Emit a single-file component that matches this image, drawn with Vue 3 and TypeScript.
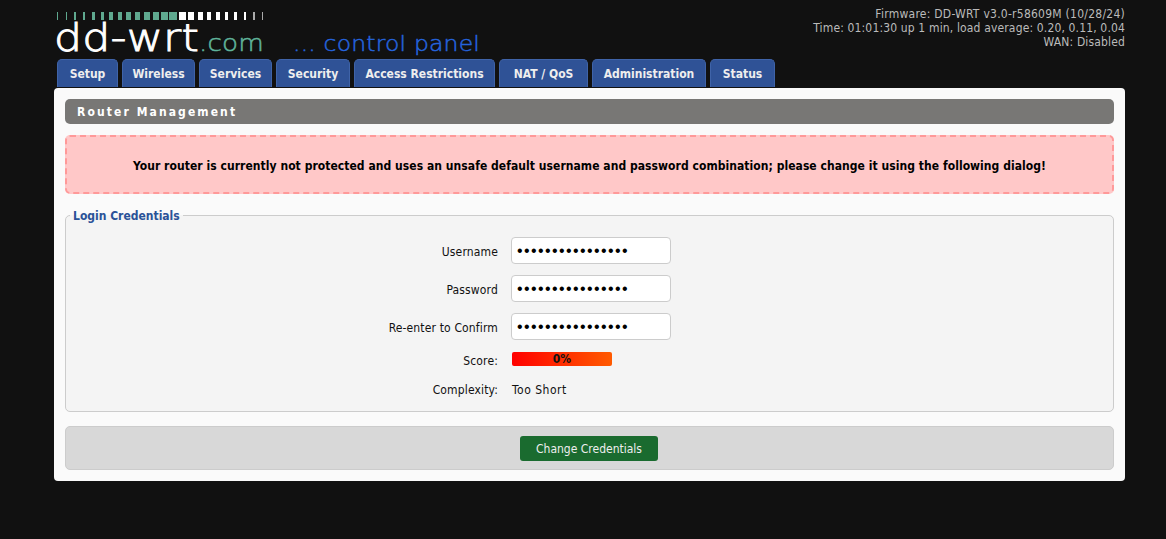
<script setup lang="ts">
const tabs = [
  "Setup",
  "Wireless",
  "Services",
  "Security",
  "Access Restrictions",
  "NAT / QoS",
  "Administration",
  "Status",
];

// logo bars: teal ramp up, white ramp down
const bars = [
  ...[1, 1, 2, 2, 3, 3, 4, 4, 5, 5, 6, 6, 7, 8].map((w) => ({ w, c: "#5fa98f" })),
  ...[7, 6, 5, 4, 4, 3, 3, 2, 2, 1].map((w, i) => ({ w, c: i > 7 ? "#aaa" : "#fff" })),
];

const secret = "0123456789abcdef";
</script>

<template>
  <div class="page">
    <header class="head">
      <div class="logo">
        <div class="bars">
          <span v-for="(b, i) in bars" :key="i" class="cell">
            <i :style="{ width: b.w + 'px', background: b.c }"></i>
          </span>
        </div>
        <svg class="wordmark" width="430" height="48" viewBox="0 0 430 48">
          <text x="-3" y="40" class="w1" textLength="145" lengthAdjust="spacingAndGlyphs">dd-wrt</text>
          <text x="142" y="40" class="w2" textLength="65" lengthAdjust="spacingAndGlyphs">.com</text>
          <text x="236" y="40" class="w3" textLength="187" lengthAdjust="spacingAndGlyphs">... control panel</text>
        </svg>
      </div>
      <div class="status">
        <div class="fw">Firmware: DD-WRT v3.0-r58609M (10/28/24)</div>
        <div>Time: 01:01:30 up 1 min, load average: 0.20, 0.11, 0.04</div>
        <div>WAN: Disabled</div>
      </div>
    </header>

    <nav class="tabs">
      <a v-for="t in tabs" :key="t" class="tab">{{ t }}</a>
    </nav>

    <main class="panel">
      <h2 class="title">Router Management</h2>
      <div class="warn">
        Your router is currently not protected and uses an unsafe default username and password combination; please change it using the following dialog!
      </div>

      <fieldset class="box">
        <legend>Login Credentials</legend>
        <div class="row">
          <label>Username</label>
          <input type="password" :value="secret" />
        </div>
        <div class="row">
          <label>Password</label>
          <input type="password" :value="secret" />
        </div>
        <div class="row">
          <label>Re-enter to Confirm</label>
          <input type="password" :value="secret" />
        </div>
        <div class="row small">
          <label class="low">Score:</label>
          <div class="score">0%</div>
        </div>
        <div class="row small">
          <label>Complexity:</label>
          <span class="val">Too Short</span>
        </div>
      </fieldset>

      <div class="actions">
        <button class="save">Change Credentials</button>
      </div>
    </main>
  </div>
</template>

<style>
body {
  background: #111;
}
</style>

<style scoped>
.page {
  width: 1071px;
  margin-left: 54px;
  font-family: "DejaVu Sans Condensed", "DejaVu Sans", sans-serif;
  font-size: 12px;
  letter-spacing: 0.15px;
  color: #111;
}
.head {
  display: flex;
  justify-content: space-between;
  height: 59px;
}
.logo {
  padding: 12px 0 0 3px;
}
.bars {
  display: flex;
  width: 214px;
  height: 8px;
  margin-left: -4px;
}
.cell {
  flex: 1;
  display: flex;
  justify-content: center;
}
.wordmark {
  display: block;
  margin-top: -9px;
  overflow: visible;
}
.w1 {
  font: 200 37px "DejaVu Sans", sans-serif;
  fill: #fff;
  stroke: #fff;
  stroke-width: 0.9px;
}
.w2 {
  font: 200 23px "DejaVu Sans", sans-serif;
  fill: #5fb39a;
  stroke: #5fb39a;
  stroke-width: 0.5px;
}
.w3 {
  font: 200 22px "DejaVu Sans", sans-serif;
  fill: #2563dc;
  stroke: #2563dc;
  stroke-width: 0.5px;
}
.status {
  padding-top: 7px;
  text-align: right;
  color: #bbb;
  line-height: 14px;
}
.fw {
  letter-spacing: 0.25px;
}
.tabs {
  display: grid;
  grid-template-columns: 61px 73px 73px 74px 141px 89px 114px 65px;
  gap: 4px;
  height: 28px;
  margin-bottom: 1px;
  padding-left: 3px;
}
.tab {
  display: flex;
  align-items: center;
  justify-content: center;
  background: #2f5296;
  color: #eee;
  font-weight: 700;
  letter-spacing: 0;
  border-radius: 5px 5px 0 0;
  border: 1px solid #3f63a8;
  border-bottom: 0;
}
.panel {
  background: #fafafa;
  border-radius: 4px;
  padding: 11px;
  height: 393px;
  box-sizing: border-box;
}
.title {
  margin: 0;
  height: 25px;
  line-height: 26px;
  padding-left: 12px;
  background: #787775;
  color: #fff;
  border-radius: 5px;
  font-size: 12px;
  font-weight: 700;
  letter-spacing: 2.1px;
}
.warn {
  margin-top: 11px;
  height: 59px;
  padding-top: 2px;
  box-sizing: border-box;
  display: flex;
  align-items: center;
  justify-content: center;
  background: #ffc8c8;
  border: 2px dashed #ff9999;
  border-radius: 5px;
  color: #000;
  font-weight: 700;
  letter-spacing: 0.05px;
}
.box {
  margin: 14px 0 0;
  padding: 15px 0 0;
  height: 204px;
  box-sizing: border-box;
  background: #f4f4f4;
  border: 1px solid #ccc;
  border-radius: 5px;
}
legend {
  padding: 0 3px 0 3px;
  margin-left: 4px;
  color: #2a5298;
  font-weight: 700;
  letter-spacing: 0;
  position: relative;
  top: 1px;
}
.row {
  display: grid;
  grid-template-columns: 432px 160px;
  column-gap: 13px;
  align-items: center;
  height: 27px;
  margin-bottom: 11px;
}
.row label {
  text-align: right;
  padding-top: 3px;
}
.row input {
  box-sizing: border-box;
  width: 160px;
  height: 27px;
  padding: 0 5px;
  background: #fff;
  border: 1px solid #ccc;
  border-radius: 4px;
  font-family: "Liberation Sans", sans-serif;
  font-size: 16px;
  letter-spacing: 1.4px;
  color: #000;
}
.row.small {
  grid-template-rows: 14px;
  align-items: start;
  height: 14px;
  margin-bottom: 0;
  margin-top: 12px;
}
.row.small + .row.small {
  margin-top: 17px;
}
.row.small label {
  padding-top: 0;
}
.row.small label.low {
  padding-top: 2px;
}
.val {
  padding-left: 1px;
  letter-spacing: 0.5px;
}
.score {
  width: 100px;
  height: 14px;
  line-height: 14px;
  margin-left: 1px;
  text-align: center;
  border-radius: 2px;
  background: linear-gradient(to right, #ff0000, #ff5a00);
  font-size: 12px;
  font-weight: 700;
}
.actions {
  margin-top: 14px;
  height: 44px;
  padding-right: 1px;
  box-sizing: border-box;
  display: flex;
  align-items: center;
  justify-content: center;
  background: #d8d8d8;
  border: 1px solid #ccc;
  border-radius: 5px;
}
.save {
  width: 138px;
  height: 25px;
  padding: 2px 0 0;
  border: 0;
  border-radius: 3px;
  background: #1a6b2f;
  color: #eee;
  font-family: "DejaVu Sans Condensed", "DejaVu Sans", sans-serif;
  font-size: 12px;
  letter-spacing: 0;
}
</style>
